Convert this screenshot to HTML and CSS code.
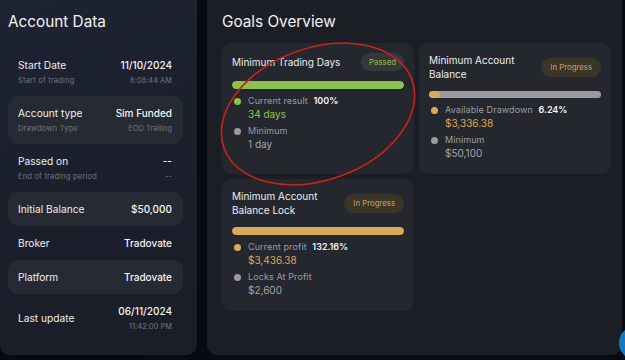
FILE: index.html
```html
<!DOCTYPE html>
<html>
<head>
<meta charset="utf-8">
<link rel="stylesheet" href="styles.css">
</head>
<body>
<div class="page">
  <aside class="account">
    <h2 class="panel-title">Account Data</h2>
    <div class="rows">
      <div class="row">
        <div class="col"><span class="lbl">Start Date</span><span class="sub">Start of trading</span></div>
        <div class="col right"><span class="val">11/10/2024</span><span class="sub">8:08:44 AM</span></div>
      </div>
      <div class="row hl">
        <div class="col"><span class="lbl">Account type</span><span class="sub">Drawdown Type</span></div>
        <div class="col right"><span class="val">Sim Funded</span><span class="sub">EOD Trailing</span></div>
      </div>
      <div class="row">
        <div class="col"><span class="lbl">Passed on</span><span class="sub">End of trading period</span></div>
        <div class="col right"><span class="val">--</span><span class="sub">--</span></div>
      </div>
      <div class="row hl single">
        <span class="lbl">Initial Balance</span><span class="val">$50,000</span>
      </div>
      <div class="row single">
        <span class="lbl">Broker</span><span class="val">Tradovate</span>
      </div>
      <div class="row hl single">
        <span class="lbl">Platform</span><span class="val">Tradovate</span>
      </div>
      <div class="row">
        <span class="lbl">Last update</span>
        <div class="col right"><span class="val">06/11/2024</span><span class="sub">11:42:00 PM</span></div>
      </div>
    </div>
  </aside>

  <main class="goals">
    <h2 class="panel-title">Goals Overview</h2>
    <div class="grid">
      <div class="card">
        <div class="card-head">
          <span class="card-title">Minimum Trading Days</span>
          <span class="badge passed">Passed</span>
        </div>
        <div class="bar"><div class="fill green" style="width:100%"></div></div>
        <div class="item">
          <span class="dot green"></span>
          <div class="item-text">
            <span class="ilbl">Current result <b>100%</b></span>
            <span class="ival green-t">34 days</span>
          </div>
        </div>
        <div class="item">
          <span class="dot grey"></span>
          <div class="item-text">
            <span class="ilbl">Minimum</span>
            <span class="ival grey-t">1 day</span>
          </div>
        </div>
      </div>

      <div class="card">
        <div class="card-head">
          <span class="card-title">Minimum Account<br>Balance</span>
          <span class="badge progress">In Progress</span>
        </div>
        <div class="bar grey-bg"><div class="fill yellow" style="width:6.24%"></div></div>
        <div class="item">
          <span class="dot yellow"></span>
          <div class="item-text">
            <span class="ilbl">Available Drawdown <b>6.24%</b></span>
            <span class="ival yellow-t">$3,336.38</span>
          </div>
        </div>
        <div class="item">
          <span class="dot grey"></span>
          <div class="item-text">
            <span class="ilbl">Minimum</span>
            <span class="ival grey-t">$50,100</span>
          </div>
        </div>
      </div>

      <div class="card">
        <div class="card-head">
          <span class="card-title">Minimum Account<br>Balance Lock</span>
          <span class="badge progress">In Progress</span>
        </div>
        <div class="bar"><div class="fill yellow" style="width:100%"></div></div>
        <div class="item">
          <span class="dot yellow"></span>
          <div class="item-text">
            <span class="ilbl">Current profit <b>132.16%</b></span>
            <span class="ival yellow-t">$3,436.38</span>
          </div>
        </div>
        <div class="item">
          <span class="dot grey"></span>
          <div class="item-text">
            <span class="ilbl">Locks At Profit</span>
            <span class="ival grey-t">$2,600</span>
          </div>
        </div>
      </div>
    </div>
  </main>
</div>

<svg class="annotation" width="625" height="360" viewBox="0 0 625 360">
  <ellipse cx="318" cy="114" rx="100" ry="66" transform="rotate(-20 318 114)" fill="none" stroke="#c8231b" stroke-width="1.6"/>
</svg>
<div class="chat-btn"></div>
</body>
</html>
```

FILE: styles.css
```css
* { box-sizing: border-box; }
html, body { margin: 0; padding: 0; }
body {
  width: 625px;
  height: 360px;
  overflow: hidden;
  background: #070a13;
  font-family: "Inter", "Lato", sans-serif;
  color: #e9e9ec;
  position: relative;
}
.page {
  display: flex;
  gap: 10px;
  height: 355px;
}
.account {
  width: 197px;
  background: linear-gradient(160deg, #1e2333 0%, #1b1f2b 55%, #1a1e28 100%);
  border-radius: 0 0 10px 10px;
  padding: 12px 0 0 0;
}
.panel-title {
  margin: 0;
  font-weight: 400;
  font-size: 15.3px;
  line-height: 20px;
  color: #f2f2f4;
  padding-left: 8px;
}
.rows {
  margin-top: 16px;
  padding: 0 14px 0 8px;
  display: flex;
  flex-direction: column;
}
.row {
  display: flex;
  justify-content: space-between;
  align-items: center;
  padding: 10px 11px 10px 10px;
  min-height: 47px;
  border-radius: 10px;
}
.row.single { min-height: 34px; padding-top: 8px; padding-bottom: 8px; }
.row.hl { background: #262a33; }
.col { display: flex; flex-direction: column; gap: 4px; }
.col.right { align-items: flex-end; }
.lbl { font-size: 10.2px; line-height: 14px; color: #eeeef0; }
.val { font-size: 10px; line-height: 14px; color: #f4f4f6; font-weight: 500; }
.sub { font-size: 7.4px; line-height: 10px; color: #737887; letter-spacing: 0.25px; }
.col.right .sub { letter-spacing: 0.05px; }

.goals {
  width: 415px;
  background: #1c1e25;
  border-radius: 0 0 10px 10px;
  padding: 12px 0 0 15px;
}
.goals .panel-title { padding-left: 0; }
.grid {
  margin-top: 11px;
  display: grid;
  grid-template-columns: 192px 192px;
  gap: 5px;
  align-items: stretch;
}
.card {
  background: #25272e;
  border-radius: 9px;
  padding: 10px 10px 14px 10px;
}
.card-head {
  display: flex;
  justify-content: space-between;
  align-items: center;
}
.card-title { font-size: 10px; line-height: 14px; color: #ececee; }
.badge {
  height: 18px;
  padding: 0 8px;
  border-radius: 9px;
  font-size: 7.8px;
  line-height: 18px;
}
.badge.passed { background: #35383b; color: #8bc34a; }
.badge.progress { background: #3a3429; color: #caa25d; padding: 0 9px; height: 19px; line-height: 19px; }
.bar {
  margin-top: 10px;
  height: 8px;
  border-radius: 4px;
  background: #25272e;
  overflow: hidden;
}
.bar.grey-bg { background: #9a9b9f; height: 7px; }
.fill { height: 100%; border-radius: 4px; }
.fill.green { background: #8bc34a; }
.fill.yellow { background: #d9aa58; }
.item {
  display: flex;
  gap: 7px;
  margin-top: 6px;
}
.item + .item { margin-top: 4px; }
.dot {
  width: 7px;
  height: 7px;
  border-radius: 50%;
  margin: 3px 0 0 2px;
  flex: none;
}
.dot.green { background: #8bc34a; }
.dot.yellow { background: #d9aa58; }
.dot.grey { background: #9a9b9f; }
.item-text { display: flex; flex-direction: column; }
.ilbl { font-size: 9px; line-height: 12px; color: #9a9ca3; letter-spacing: 0.1px; }
.ilbl b { color: #f2f2f4; font-weight: 600; margin-left: 3px; letter-spacing: 0; }
.ival { font-size: 10px; line-height: 14px; }
.green-t { color: #8bc34a; }
.yellow-t { color: #d9aa58; }
.grey-t { color: #a3a5ab; }

.annotation {
  position: absolute;
  left: 0;
  top: 0;
  pointer-events: none;
}
.chat-btn {
  position: absolute;
  left: 619px;
  top: 326px;
  width: 34px;
  height: 34px;
  border-radius: 50%;
  background: #1479c4;
}
```
